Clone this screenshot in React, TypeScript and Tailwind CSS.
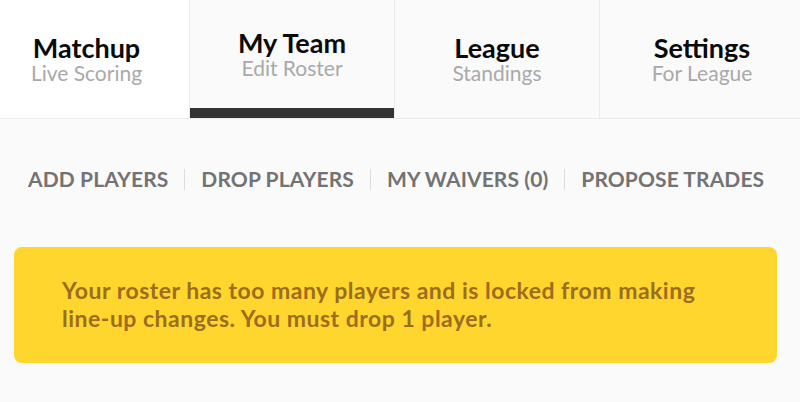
import React from "react";

const tabs = [
  { title: "Matchup", sub: "Live Scoring", bg: "bg-white", active: false },
  { title: "My Team", sub: "Edit Roster", bg: "bg-[#fafafa]", active: true },
  { title: "League", sub: "Standings", bg: "bg-[#fafafa]", active: false },
  { title: "Settings", sub: "For League", bg: "bg-[#fafafa]", active: false },
];

const links = ["ADD PLAYERS", "DROP PLAYERS", "MY WAIVERS (0)", "PROPOSE TRADES"];

export default function App() {
  return (
    <div
      className="w-[800px] h-[402px] bg-[#fafafa] overflow-hidden"
      style={{ fontFamily: "Lato, 'Open Sans', sans-serif" }}
    >
      <div className="flex h-[119px] border-b border-[#ebebeb] -ml-[16px]">
        {tabs.map((t, i) => (
          <div
            key={t.title}
            className={`w-[205px] shrink-0 ${t.bg} relative flex flex-col items-center justify-center ${i > 0 ? "border-l border-[#ebebeb]" : ""} ${t.active ? "pb-[10px]" : ""}`}
          >
            <div className="text-[27px] leading-[27px] font-bold text-[#0a0a0a]">{t.title}</div>
            <div className="text-[21px] leading-[24px] text-[#a9a9a9]">{t.sub}</div>
            {t.active && (
              <div className="absolute left-0 right-0 bottom-0 h-[10px] bg-[#333333]" />
            )}
          </div>
        ))}
      </div>
      <div className="flex items-center pl-[28px] mt-[48px] h-[24px]">
        {links.map((l, i) => (
          <React.Fragment key={l}>
            {i > 0 && <div className="w-px h-[21px] bg-[#dcdcdc] mx-[16px]" />}
            <span className="text-[21px] leading-[24px] font-bold tracking-[0.1px] text-[#737373] whitespace-nowrap">{l}</span>
          </React.Fragment>
        ))}
      </div>
      <div className="ml-[14px] mr-[23px] mt-[56px] rounded-[8px] bg-[#ffd62e] px-[48px] pt-[29px] pb-[31px]">
        <p className="text-[23px] leading-[28px] font-bold tracking-[0.5px] text-[#9c6d1e]">
          Your roster has too many players and is locked from making line-up changes. You must drop 1 player.
        </p>
      </div>
    </div>
  );
}
